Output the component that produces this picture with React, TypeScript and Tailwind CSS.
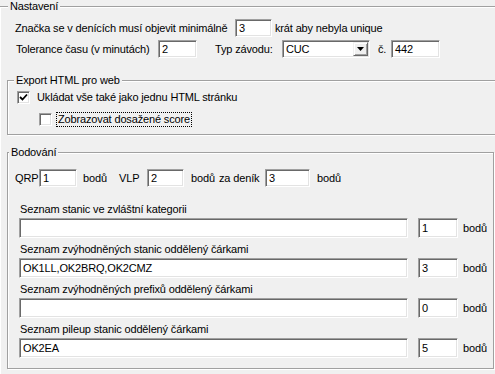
const sunken =
  "bg-white border border-t-[#a0a0a0] border-l-[#a0a0a0] border-b-white border-r-white shadow-[inset_1px_1px_0_#696969,inset_-1px_-1px_0_#e3e3e3]";

function Edit({ value = "", className = "" }: { value?: string; className?: string }) {
  return (
    <div className={`flex items-center pl-[3px] leading-[13px] ${sunken} ${className}`}>
      {value}
    </div>
  );
}

function Group({ title, legendClass, className, children }: any) {
  return (
    <fieldset className={`border border-[#a0a0a0] shadow-[inset_1px_1px_0_#fff,1px_1px_0_#fff] ${className}`}>
      <legend className={`px-[2px] bg-[#f0f0f0] leading-[12px] ${legendClass}`}>{title}</legend>
      {children}
    </fieldset>
  );
}

function Check({ checked }: { checked?: boolean }) {
  return (
    <div className={`w-[13px] h-[13px] shrink-0 flex items-center justify-center ${sunken}`}>
      {checked && (
        <svg width="9" height="9" viewBox="0 0 9 9">
          <path d="M1 4 L3.5 6.5 L8 1.5" fill="none" stroke="#000" strokeWidth="1.8" />
        </svg>
      )}
    </div>
  );
}

function ListRow({ label, value, points, first }: any) {
  return (
    <div className={first ? "" : "mt-[4px]"}>
      <div className="h-[14px] leading-[14px] pl-[12px]">{label}</div>
      <div className="mt-[2px] flex items-center h-[20px]">
        <Edit value={value} className="ml-[11px] w-[389px] h-[20px]" />
        <Edit value={points} className="ml-[10px] w-[40px] h-[20px]" />
        <span className="ml-[5px]">bodů</span>
      </div>
    </div>
  );
}

export default function App() {
  return (
    <div className="w-[495px] h-[374px] overflow-hidden bg-[#f0f0f0] text-black text-[11px] tracking-[-0.15px] font-['Liberation_Sans',Arial,sans-serif]">
      <Group title="Nastavení" legendClass="ml-[8px]" className="-ml-[1px] w-[520px] h-[400px]">
        {/* horní řádky */}
        <div className="mt-[7px] flex items-center h-[18px] pl-[15px]">
          <span className="w-[220px] shrink-0">Značka se v denících musí objevit minimálně</span>
          <Edit value="3" className="w-[37px] h-[18px]" />
          <span className="ml-[3px]">krát aby nebyla unique</span>
        </div>
        <div className="mt-[3px] flex items-center h-[18px] pl-[16px]">
          <span className="w-[142px] shrink-0">Tolerance času (v minutách)</span>
          <Edit value="2" className="w-[39px] h-[18px]" />
          <span className="ml-[18px] w-[67px] shrink-0">Typ závodu:</span>
          <div className={`relative flex items-center w-[88px] h-[18px] pl-[3px] ${sunken}`}>
            CUC
            <div className="absolute right-[1px] top-[1px] w-[15px] h-[14px] bg-[#f0f0f0] border border-t-[#f0f0f0] border-l-[#f0f0f0] border-b-[#696969] border-r-[#696969] shadow-[inset_1px_1px_0_#fff,inset_-1px_-1px_0_#a0a0a0] flex items-center justify-center">
              <svg width="7" height="4" viewBox="0 0 7 4">
                <path d="M0 0 H7 L3.5 4 Z" fill="#000" />
              </svg>
            </div>
          </div>
          <span className="ml-[8px] w-[13px] shrink-0">č.</span>
          <Edit value="442" className="w-[49px] h-[18px]" />
        </div>

        {/* Export HTML */}
        <Group title="Export HTML pro web" legendClass="ml-[6px]" className="ml-[7px] mt-[16px] w-[520px] pb-[8px]">
          <div className="mt-[5px] pl-[9px] flex items-center h-[13px]">
            <Check checked />
            <span className="ml-[7px]">Ukládat vše také jako jednu HTML stránku</span>
          </div>
          <div className="mt-[9px] pl-[31px] flex items-center h-[13px]">
            <Check />
            <span className="ml-[4px] px-[1px] h-[15px] leading-[13px] border border-dotted border-black">
              Zobrazovat dosažené score
            </span>
          </div>
        </Group>

        {/* Bodování */}
        <Group title="Bodování" legendClass="ml-[1px]" className="ml-[7px] mt-[11px] w-[487px] pb-[10px]">
          <div className="mt-[11px] pl-[7px] flex items-center h-[18px]">
            <span className="w-[24px] shrink-0">QRP</span>
            <Edit value="1" className="w-[38px] h-[18px]" />
            <span className="ml-[6px] w-[36px] shrink-0">bodů</span>
            <span className="w-[28px] shrink-0">VLP</span>
            <Edit value="2" className="w-[37px] h-[18px]" />
            <span className="ml-[7px] w-[28px] shrink-0">bodů</span>
            <span className="w-[46px] shrink-0">za deník</span>
            <Edit value="3" className="w-[45px] h-[18px]" />
            <span className="ml-[7px]">bodů</span>
          </div>
          <div className="mt-[15px]">
            <ListRow first label="Seznam stanic ve zvláštní kategorii" value="" points="1" />
            <ListRow label="Seznam zvýhodněných stanic oddělený čárkami" value="OK1LL,OK2BRQ,OK2CMZ" points="3" />
            <ListRow label="Seznam zvýhodněných prefixů oddělený čárkami" value="" points="0" />
            <ListRow label="Seznam pileup stanic oddělený čárkami" value="OK2EA" points="5" />
          </div>
        </Group>
      </Group>
    </div>
  );
}
